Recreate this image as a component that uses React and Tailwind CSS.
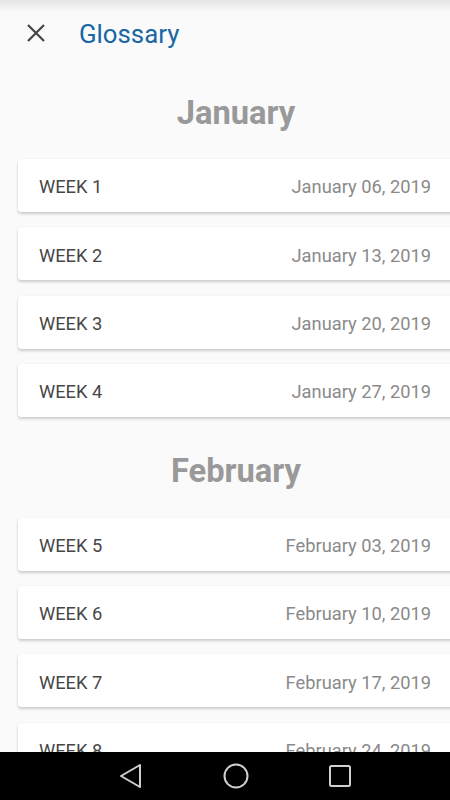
import React from "react";

const jan = [
  ["WEEK 1", "January 06, 2019"],
  ["WEEK 2", "January 13, 2019"],
  ["WEEK 3", "January 20, 2019"],
  ["WEEK 4", "January 27, 2019"],
];
const feb = [
  ["WEEK 5", "February 03, 2019"],
  ["WEEK 6", "February 10, 2019"],
  ["WEEK 7", "February 17, 2019"],
  ["WEEK 8", "February 24, 2019"],
];

function Card({ w, d }) {
  return (
    <div className="ml-[18px] w-[436px] h-[53px] shrink-0 bg-white rounded-[3px] shadow-[0_2px_3px_rgba(0,0,0,0.18),0_0_1px_rgba(0,0,0,0.12)] flex items-center justify-between pl-[21px] pr-[23px] pt-[3px]">
      <span className="text-[18.3px] text-[#474747]">{w}</span>
      <span className="text-[18.3px] text-[#8a8a8a]">{d}</span>
    </div>
  );
}

export default function App() {
  return (
    <div
      className="relative w-[450px] h-[800px] overflow-hidden bg-[#fafafa]"
      style={{ fontFamily: "Roboto, 'Liberation Sans', sans-serif" }}
    >
      <div className="absolute top-0 left-0 right-0 h-[12px] bg-gradient-to-b from-[#e4e4e4] to-[#fafafa]" />
      <div className="relative flex flex-col">
        <div className="h-[68px] flex items-center pl-[26px]">
          <svg width="20" height="20" viewBox="0 0 20 20" className="mb-[2px]">
            <path d="M2 2 L18 18 M18 2 L2 18" stroke="#444" strokeWidth="2.2" />
          </svg>
          <span className="ml-[33px] text-[25.8px] text-[#1766a5]">Glossary</span>
        </div>
        <div className="h-[89px] flex items-center justify-center">
          <span className="text-[32.7px] font-bold text-[#999] ml-[22px] mt-[2px]">January</span>
        </div>
        <div className="flex flex-col gap-[15.3px] mt-[2px]">
          {jan.map(([w, d]) => (
            <Card key={w} w={w} d={d} />
          ))}
        </div>
        <div className="h-[101px] flex items-center justify-center">
          <span className="text-[32.7px] font-bold text-[#999] ml-[22px] mt-[8px]">February</span>
        </div>
        <div className="flex flex-col gap-[15.3px]">
          {feb.map(([w, d]) => (
            <Card key={w} w={w} d={d} />
          ))}
        </div>
      </div>
      <div className="absolute left-0 right-0 bottom-0 h-[48px] bg-black flex items-center">
        <svg width="450" height="48" viewBox="0 0 450 48">
          <path d="M140 13 L121 24 L140 35 Z" fill="none" stroke="#d0d0d0" strokeWidth="2" strokeLinejoin="round" />
          <circle cx="236" cy="24" r="11.5" fill="none" stroke="#d0d0d0" strokeWidth="2" />
          <rect x="330" y="14" width="20" height="20" rx="1.5" fill="none" stroke="#d0d0d0" strokeWidth="2" />
        </svg>
      </div>
    </div>
  );
}
